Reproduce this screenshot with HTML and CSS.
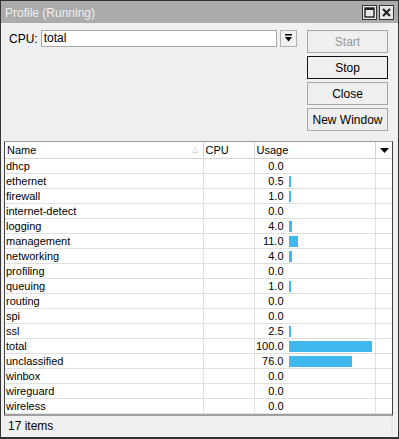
FILE: index.html
```html
<!DOCTYPE html>
<html lang="en">
<head>
  <meta charset="UTF-8" />
  <title>Profile (Running)</title>
  <link rel="stylesheet" href="styles.css">
</head>
<body>
  <div class="window">
    <div class="titlebar">
      <span class="title">Profile (Running)</span>
      <div class="title-btns">
        <span class="tbtn">
          <svg width="11" height="11" viewBox="0 0 11 11"><rect x="1" y="1" width="9" height="9" fill="none" stroke="#222" stroke-width="1.4"/><rect x="1" y="1" width="9" height="2" fill="#222"/></svg>
        </span>
        <span class="tbtn">
          <svg width="11" height="11" viewBox="0 0 11 11"><path d="M2 2 L9 9 M9 2 L2 9" stroke="#222" stroke-width="2.2"/></svg>
        </span>
      </div>
    </div>

    <div class="top">
      <div class="cpu-row">
        <label class="cpu-label">CPU:</label>
        <div class="cpu-input">total</div>
        <div class="drop-btn">
          <svg width="9" height="9" viewBox="0 0 9 9"><rect x="1" y="0" width="7" height="1.5" fill="#000"/><path d="M1 3 H8 L4.5 7.5 Z" fill="#000"/></svg>
        </div>
      </div>
      <div class="buttons">
        <button class="btn disabled">Start</button>
        <button class="btn default">Stop</button>
        <button class="btn">Close</button>
        <button class="btn">New Window</button>
      </div>
    </div>

    <div class="list">
      <table class="grid">
        <colgroup>
          <col class="c-name"><col class="c-cpu"><col class="c-usage"><col class="c-menu">
        </colgroup>
        <thead>
          <tr>
            <th class="th-name">Name <span class="sort">&#9651;</span></th>
            <th>CPU</th>
            <th>Usage</th>
            <th class="th-menu"><svg width="9" height="5" viewBox="0 0 9 5"><path d="M0 0 H9 L4.5 5 Z" fill="#000"/></svg></th>
          </tr>
        </thead>
        <tbody>
          <tr><td>dhcp</td><td></td><td><div class="usage"><span class="num">0.0</span></div></td><td></td></tr>
          <tr><td>ethernet</td><td></td><td><div class="usage"><span class="num">0.5</span><span class="bar" style="width:2px"></span></div></td><td></td></tr>
          <tr><td>firewall</td><td></td><td><div class="usage"><span class="num">1.0</span><span class="bar" style="width:2px"></span></div></td><td></td></tr>
          <tr><td>internet-detect</td><td></td><td><div class="usage"><span class="num">0.0</span></div></td><td></td></tr>
          <tr><td>logging</td><td></td><td><div class="usage"><span class="num">4.0</span><span class="bar" style="width:3px"></span></div></td><td></td></tr>
          <tr><td>management</td><td></td><td><div class="usage"><span class="num">11.0</span><span class="bar" style="width:9px"></span></div></td><td></td></tr>
          <tr><td>networking</td><td></td><td><div class="usage"><span class="num">4.0</span><span class="bar" style="width:3px"></span></div></td><td></td></tr>
          <tr><td>profiling</td><td></td><td><div class="usage"><span class="num">0.0</span></div></td><td></td></tr>
          <tr><td>queuing</td><td></td><td><div class="usage"><span class="num">1.0</span><span class="bar" style="width:2px"></span></div></td><td></td></tr>
          <tr><td>routing</td><td></td><td><div class="usage"><span class="num">0.0</span></div></td><td></td></tr>
          <tr><td>spi</td><td></td><td><div class="usage"><span class="num">0.0</span></div></td><td></td></tr>
          <tr><td>ssl</td><td></td><td><div class="usage"><span class="num">2.5</span><span class="bar" style="width:2px"></span></div></td><td></td></tr>
          <tr><td>total</td><td></td><td><div class="usage"><span class="num">100.0</span><span class="bar" style="width:83px"></span></div></td><td></td></tr>
          <tr><td>unclassified</td><td></td><td><div class="usage"><span class="num">76.0</span><span class="bar" style="width:63px"></span></div></td><td></td></tr>
          <tr><td>winbox</td><td></td><td><div class="usage"><span class="num">0.0</span></div></td><td></td></tr>
          <tr><td>wireguard</td><td></td><td><div class="usage"><span class="num">0.0</span></div></td><td></td></tr>
          <tr><td>wireless</td><td></td><td><div class="usage"><span class="num">0.0</span></div></td><td></td></tr>
        </tbody>
      </table>
    </div>

    <div class="status">17 items</div>
  </div>
</body>
</html>
```

FILE: styles.css
```css
html, body {
  margin: 0;
  padding: 0;
}
body {
  font-family: "Liberation Sans", Arial, sans-serif;
  font-size: 11px;
  color: #000;
  background: #f0f0f0;
}
.window {
  width: 399px;
  height: 439px;
  box-sizing: border-box;
  border: 1px solid #333;
  border-bottom-width: 2px;
  background: #f0f0f0;
  display: flex;
  flex-direction: column;
}
.titlebar {
  height: 22px;
  background: #ababab;
  display: flex;
  align-items: center;
  justify-content: space-between;
  padding: 0 4px 0 4px;
}
.title {
  color: #efefef;
  font-size: 12px;
  padding-top: 1px;
}
.title-btns {
  display: flex;
  gap: 2px;
  padding-top: 1px;
}
.tbtn {
  width: 13px;
  height: 13px;
  border: 1px solid #333;
  background: #e8e8e8;
  display: flex;
  align-items: center;
  justify-content: center;
}
.top {
  display: flex;
  justify-content: space-between;
  padding: 7px 10px 0 8px;
}
.cpu-row {
  display: flex;
  align-items: flex-start;
}
.cpu-label {
  font-size: 12px;
  padding: 2px 3px 0 0;
}
.cpu-input {
  width: 232px;
  height: 15px;
  border: 1px solid #a8a8a8;
  background: #fff;
  font-size: 12px;
  line-height: 15px;
  padding-left: 2px;
  color: #000;
}
.drop-btn {
  width: 15px;
  height: 15px;
  margin-left: 3px;
  border: 1px solid #b0b0b0;
  background: #f0f0f0;
  display: flex;
  align-items: center;
  justify-content: center;
}
.buttons {
  display: flex;
  flex-direction: column;
  gap: 3px;
}
.btn {
  width: 81px;
  height: 23px;
  border: 1px solid #a6a6a6;
  background: #efefef;
  font-family: "Liberation Sans", Arial, sans-serif;
  font-size: 12px;
  color: #000;
  padding: 0;
}
.btn.default {
  border-color: #111;
}
.btn.disabled {
  color: #9a9a9a;
}
.list {
  margin: 10px 5px 0 3px;
  height: 272px;
  border: 1px solid #9a9a9a;
  border-left-color: #444;
  border-right-color: #444;
  border-bottom: 2px solid #a0a0a0;
  background: #fff;
  overflow: hidden;
}
.grid {
  border-collapse: collapse;
  table-layout: fixed;
  width: 388px;
}
.c-name { width: 198px; }
.c-cpu { width: 51px; }
.c-usage { width: 121px; }
.c-menu { width: 18px; }
.grid th {
  height: 16px;
  font-weight: normal;
  text-align: left;
  padding: 0 0 0 2px;
  border-right: 1px solid #d4d4d4;
  border-bottom: 1px solid #d4d4d4;
  white-space: nowrap;
  overflow: hidden;
  position: relative;
}
.grid th:last-child {
  border-right: none;
}
.sort {
  position: absolute;
  right: 5px;
  top: 3px;
  color: #c4c4c4;
  font-size: 8px;
}
.th-menu {
  text-align: center !important;
  padding: 0 !important;
}
.th-menu svg {
  display: block;
  margin: 0 auto;
}
.grid td {
  height: 14px;
  padding: 0 0 0 1px;
  border-right: 1px solid #e0e0e0;
  border-bottom: 1px solid #e0e0e0;
  white-space: nowrap;
  overflow: hidden;
  line-height: 14px;
}
.grid td:last-child {
  border-right: none;
}
.usage {
  display: flex;
  align-items: center;
  height: 14px;
}
.num {
  width: 28px;
  text-align: right;
  flex: none;
}
.bar {
  display: block;
  height: 11px;
  margin-left: 5px;
  background: #3fb9ed;
}
.status {
  margin: 1px 5px 0 3px;
  height: 18px;
  line-height: 18px;
  padding-left: 4px;
  font-size: 12px;
  border-right: 2px solid #e6e6e6;
}
```
